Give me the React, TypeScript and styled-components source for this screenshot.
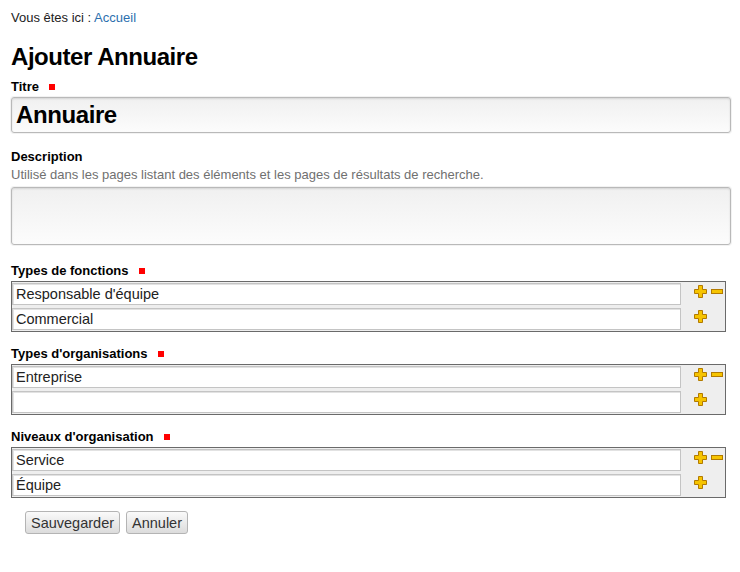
import { FC } from 'react';
import styled, { createGlobalStyle } from 'styled-components';

const GlobalStyle = createGlobalStyle`
  body {
    margin: 0;
    background: #fff;
    font-family: 'Liberation Sans', Arial, sans-serif;
    color: #000;
  }
`;

interface MultiFieldProp {
  label: string;
  values: string[];
  space?: number;
}

const PlusIcon: FC = () => (
  <svg width="13" height="13" viewBox="0 0 13 13">
    <polygon
      points="4.5,0.5 8.5,0.5 8.5,4.5 12.5,4.5 12.5,8.5 8.5,8.5 8.5,12.5 4.5,12.5 4.5,8.5 0.5,8.5 0.5,4.5 4.5,4.5"
      fill="#f6c400"
      stroke="#b27a00"
      strokeWidth="1"
    />
  </svg>
);

const MinusIcon: FC = () => (
  <svg width="12" height="5" viewBox="0 0 12 5">
    <rect x="0.5" y="0.5" width="11" height="4" fill="#f6c400" stroke="#b27a00" strokeWidth="1" />
  </svg>
);

const MultiField: FC<MultiFieldProp> = ({ label, values, space = 14 }) => (
  <Field $space={space}>
    <Label>
      {label}
      <Required />
    </Label>
    <MultiBox>
      {values.map((value, i) => (
        <MultiRow key={i}>
          <RowInput defaultValue={value} />
          <Actions>
            <IconButton title="Ajouter">
              <PlusIcon />
            </IconButton>
            {i === 0 && (
              <IconButton title="Supprimer">
                <MinusIcon />
              </IconButton>
            )}
          </Actions>
        </MultiRow>
      ))}
    </MultiBox>
  </Field>
);

export default function App() {
  return (
    <Page>
      <GlobalStyle />
      <Breadcrumb>
        Vous êtes ici : <Crumb href="#">Accueil</Crumb>
      </Breadcrumb>
      <Title>Ajouter Annuaire</Title>

      <Field $space={16}>
        <Label>
          Titre
          <Required />
        </Label>
        <TextInput defaultValue="Annuaire" />
      </Field>

      <Field $space={18}>
        <Label>Description</Label>
        <Help>Utilisé dans les pages listant des éléments et les pages de résultats de recherche.</Help>
        <TextArea />
      </Field>

      <MultiField label="Types de fonctions" values={['Responsable d\'équipe', 'Commercial']} />
      <MultiField label="Types d'organisations" values={['Entreprise', '']} />
      <MultiField label="Niveaux d'organisation" values={['Service', 'Équipe']} space={13} />

      <ButtonBar>
        <Button>Sauvegarder</Button>
        <Button>Annuler</Button>
      </ButtonBar>
    </Page>
  );
}

const Page = styled.div`
  padding: 9px 9px 30px 11px;
`;

const Breadcrumb = styled.div`
  font-size: 13px;
  line-height: 18px;
  color: #222;
`;

const Crumb = styled.a`
  color: #2c6fae;
  text-decoration: none;
`;

const Title = styled.h1`
  margin: 15px 0 7px;
  font-size: 24px;
  line-height: 30px;
  letter-spacing: -0.45px;
  font-weight: bold;
`;

const Field = styled.div<{ $space: number }>`
  margin-bottom: ${(p) => p.$space}px;
`;

const Label = styled.div`
  display: flex;
  align-items: center;
  font-size: 13px;
  line-height: 16px;
  font-weight: bold;
  margin-bottom: 2px;
`;

const Required = styled.span`
  display: inline-block;
  width: 6px;
  height: 6px;
  margin-left: 10px;
  background: #f00;
`;

const Help = styled.div`
  font-size: 13px;
  line-height: 16px;
  color: #707070;
  margin-bottom: 4px;
`;

const TextInput = styled.input`
  display: block;
  box-sizing: border-box;
  width: 100%;
  height: 36px;
  margin: 0;
  padding: 0 4px;
  border: 1px solid #b9b9b9;
  border-radius: 3px;
  background: linear-gradient(#f0f0f0, #fcfcfc);
  box-shadow: inset 0 1px 2px rgba(0, 0, 0, 0.12), 0 0 0 1px #f2f2f2;
  font-family: 'Liberation Sans', Arial, sans-serif;
  font-size: 24px;
  font-weight: bold;
  letter-spacing: -0.4px;
  color: #000;
`;

const TextArea = styled.textarea`
  display: block;
  box-sizing: border-box;
  width: 100%;
  height: 58px;
  margin: 0;
  padding: 4px;
  resize: none;
  border: 1px solid #b9b9b9;
  border-radius: 3px;
  background: linear-gradient(#f0f0f0, #fcfcfc);
  box-shadow: inset 0 1px 2px rgba(0, 0, 0, 0.12), 0 0 0 1px #f2f2f2;
  font-family: 'Liberation Sans', Arial, sans-serif;
`;

const MultiBox = styled.div`
  width: 715px;
  box-sizing: border-box;
  border: 1px solid #6a6a6a;
  background: #eeeeee;
  padding: 1px 0;
  display: flex;
  flex-direction: column;
  gap: 3px;
`;

const MultiRow = styled.div`
  display: flex;
  align-items: flex-start;
`;

const RowInput = styled.input`
  flex: 1;
  box-sizing: border-box;
  height: 22px;
  margin: 0;
  padding: 0 3px;
  border: 1px solid #c4c4c4;
  box-shadow: inset 1px 1px 0 #e2e2e2;
  background: #fff;
  font-family: 'Liberation Sans', Arial, sans-serif;
  font-size: 14.5px;
  color: #222;
  outline: none;
`;

const Actions = styled.div`
  width: 44px;
  box-sizing: border-box;
  height: 13px;
  margin-top: 2px;
  padding-left: 13px;
  display: flex;
  align-items: center;
  gap: 4px;
`;

const IconButton = styled.span`
  display: flex;
  cursor: pointer;
`;

const ButtonBar = styled.div`
  display: flex;
  gap: 6px;
  padding-left: 14px;
`;

const Button = styled.button`
  height: 23px;
  padding: 0 5px;
  border: 1px solid #b4b4b4;
  border-radius: 3px;
  background: linear-gradient(#fafafa, #dcdcdc);
  font-family: 'Liberation Sans', Arial, sans-serif;
  font-size: 14.5px;
  color: #333;
  cursor: pointer;
`;
